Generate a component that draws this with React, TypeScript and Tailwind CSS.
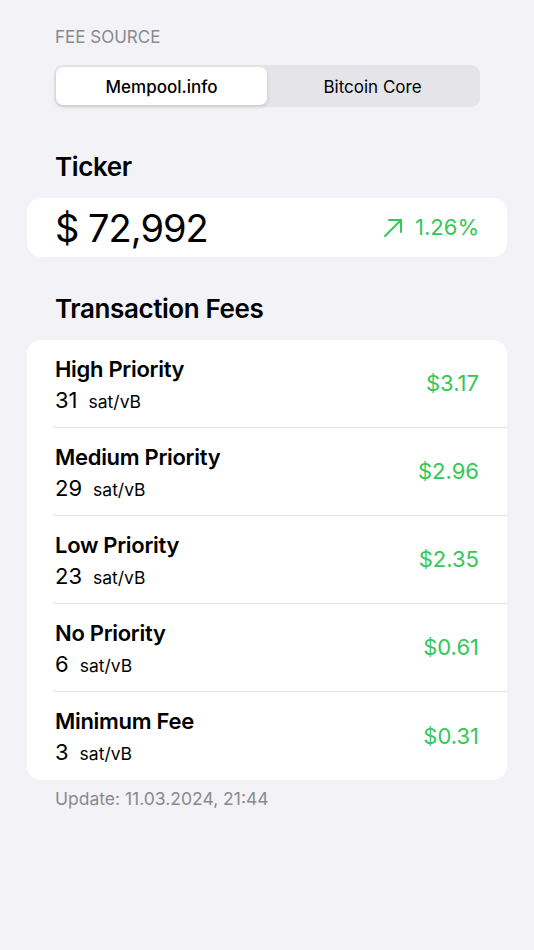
import React from "react";

const fees = [
  { name: "High Priority", rate: "31", price: "$3.17" },
  { name: "Medium Priority", rate: "29", price: "$2.96" },
  { name: "Low Priority", rate: "23", price: "$2.35" },
  { name: "No Priority", rate: "6", price: "$0.61" },
  { name: "Minimum Fee", rate: "3", price: "$0.31" },
];

export default function App() {
  return (
    <div
      className="min-h-[950px] w-full bg-[#f2f2f7] px-[27px] pt-[26px] text-black"
      style={{ fontFamily: "Inter, 'Noto Sans', sans-serif" }}
    >
      <div className="px-[28px] text-[17px] leading-[22px] text-[#8a8a8e]">FEE SOURCE</div>
      <div className="mx-[27px] mt-[17px] flex h-[42px] rounded-[9px] bg-[#e4e4e9] p-[2px]">
        <div className="flex flex-1 items-center justify-center rounded-[7px] bg-white pt-[3px] text-[17px] font-medium shadow-[0_2px_4px_rgba(0,0,0,0.12)]">
          Mempool.info
        </div>
        <div className="flex flex-1 items-center justify-center pt-[3px] text-[17px]">Bitcoin Core</div>
      </div>

      <div className="mt-[44px] px-[28px] text-[26px] font-semibold leading-[32px] tracking-[-0.4px]">Ticker</div>
      <div className="mt-[15px] flex h-[59px] items-center justify-between rounded-[14px] bg-white pl-[28px] pr-[28px]">
        <div className="text-[38px] leading-none tracking-[-1px]">$ 72,992</div>
        <div className="flex items-center gap-[12px] text-[22px] text-[#34c759]">
          <svg width="20" height="20" viewBox="0 0 20 20" fill="none" stroke="#34c759" strokeWidth="2" strokeLinecap="round" strokeLinejoin="round">
            <path d="M2 18L18 2" />
            <path d="M6 2h12v12" />
          </svg>
          <span>1.26%</span>
        </div>
      </div>

      <div className="mt-[36px] px-[28px] text-[26px] font-semibold leading-[32px] tracking-[-0.4px]">Transaction Fees</div>
      <div className="mt-[15px] rounded-[14px] bg-white">
        {fees.map((f, i) => (
          <div key={f.name} className="flex">
            <div className="w-[26px] shrink-0" />
            <div className={`flex h-[88px] flex-1 items-center justify-between pl-[2px] pr-[28px] ${i < fees.length - 1 ? "border-b border-[#e3e3e7]" : ""}`}>
              <div className="flex flex-col pt-[3px]">
                <div className="text-[22px] font-semibold leading-[28px] tracking-[-0.3px]">{f.name}</div>
                <div className="mt-[4px] flex items-baseline gap-[11px]">
                  <span className="text-[22px] leading-[26px]">{f.rate}</span>
                  <span className="text-[17.5px]">sat/vB</span>
                </div>
              </div>
              <div className="text-[22px] text-[#34c759]">{f.price}</div>
            </div>
          </div>
        ))}
      </div>
      <div className="mt-[8px] px-[28px] text-[17.5px] leading-[22px] text-[#8a8a8e]">Update: 11.03.2024, 21:44</div>
    </div>
  );
}
